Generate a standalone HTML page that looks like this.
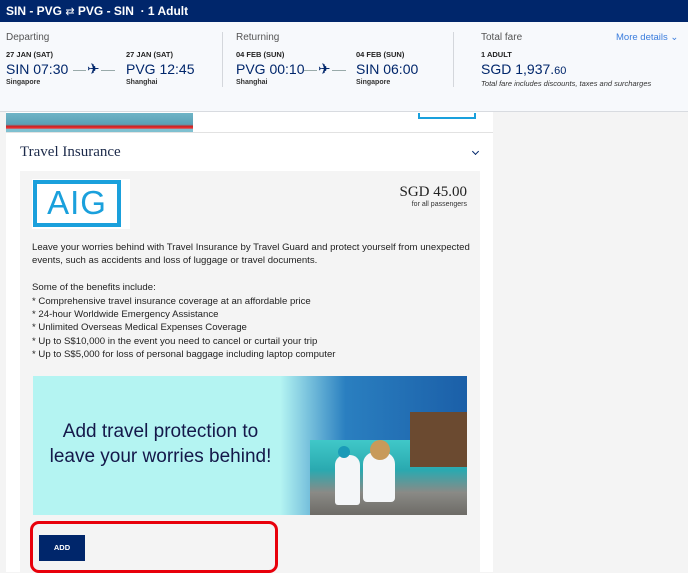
<!DOCTYPE html><html><head><style>
*{margin:0;padding:0;box-sizing:border-box}
body{width:688px;height:572px;overflow:hidden;background:#f4f4f4;font-family:"Liberation Sans",sans-serif;position:relative;color:#333}
.a{position:absolute;white-space:nowrap}
.top{left:0;top:0;width:688px;height:22px;background:#00266b;color:#fff;font-weight:bold;font-size:12px;padding:4px 6px}
.sum{left:0;top:22px;width:688px;height:90px;background:#f7f9fc;border-bottom:1px solid #d8dbe0}
.lb{font-size:10px;color:#555}
.d{font-size:7.5px;font-weight:bold;color:#222}
.t{font-size:14px;color:#00266b}
.c{font-size:7px;font-weight:bold;color:#333}
.vl{width:1px;background:#d4d7dc;height:55px;top:32px}
.ln{height:1px;background:#9aa;width:14px}
.card{left:6px;top:112px;width:487px;height:460px;background:#fff}
.box{left:20px;top:171px;width:460px;height:401px;background:#f4f4f4}
.body{font-size:9.6px;line-height:13.4px;color:#222}
</style></head><body>
<div class="a top">SIN - PVG <span style="font-weight:normal;font-size:11px">⇄</span> PVG - SIN &nbsp;· 1 Adult</div>
<div class="a sum"></div>
<div class="a lb" style="left:6px;top:32px">Departing</div>
<div class="a d" style="left:6px;top:50px">27 JAN (SAT)</div>
<div class="a t" style="left:6px;top:61px">SIN 07:30</div>
<div class="a c" style="left:6px;top:79px">Singapore</div>
<div class="a ln" style="left:73px;top:70px;width:42px"></div>
<div class="a" style="left:86px;top:60px;font-size:15px;color:#00266b;background:#f7f9fc;padding:0 1px">✈</div>
<div class="a d" style="left:126px;top:50px">27 JAN (SAT)</div>
<div class="a t" style="left:126px;top:61px">PVG 12:45</div>
<div class="a c" style="left:126px;top:79px">Shanghai</div>
<div class="a vl" style="left:222px"></div>
<div class="a lb" style="left:236px;top:32px">Returning</div>
<div class="a d" style="left:236px;top:50px">04 FEB (SUN)</div>
<div class="a t" style="left:236px;top:61px">PVG 00:10</div>
<div class="a c" style="left:236px;top:79px">Shanghai</div>
<div class="a ln" style="left:304px;top:70px;width:42px"></div>
<div class="a" style="left:317px;top:60px;font-size:15px;color:#00266b;background:#f7f9fc;padding:0 1px">✈</div>
<div class="a d" style="left:356px;top:50px">04 FEB (SUN)</div>
<div class="a t" style="left:356px;top:61px">SIN 06:00</div>
<div class="a c" style="left:356px;top:79px">Singapore</div>
<div class="a vl" style="left:453px"></div>
<div class="a lb" style="left:481px;top:32px">Total fare</div>
<div class="a" style="left:616px;top:32px;font-size:9.5px;color:#3b7ddd">More details ⌄</div>
<div class="a d" style="left:481px;top:50px">1 ADULT</div>
<div class="a t" style="left:481px;top:61px">SGD 1,937.<span style="font-size:11px">60</span></div>
<div class="a" style="left:481px;top:79px;font-size:7.5px;font-style:italic;color:#333">Total fare includes discounts, taxes and surcharges</div>
<div class="a card"></div>
<div class="a" style="left:6px;top:113px;width:187px;height:19px;background:linear-gradient(#6fb5c7 0,#5aa0b5 60%,#c22 70%,#e33 80%,#7fc0d0 85%)"></div>
<div class="a" style="left:418px;top:113px;width:58px;height:6px;border:2px solid #1aa0dc;border-top:none"></div>
<div class="a" style="left:6px;top:132px;width:487px;height:1px;background:#e2e2e2"></div>
<div class="a" style="left:20px;top:144px;font-family:'Liberation Serif',serif;font-size:15px;color:#1c2a4a">Travel Insurance</div>
<div class="a" style="left:473px;top:149px;width:5px;height:5px;border-right:1px solid #00266b;border-bottom:1px solid #00266b;transform:rotate(45deg)"></div>
<div class="a box"></div>
<div class="a" style="left:32px;top:179px;width:98px;height:50px;background:#fff"></div>
<div class="a" style="left:33px;top:180px;width:88px;height:47px;border:4px solid #1aa0dc;color:#1aa0dc;font-size:33px;text-align:center;line-height:38px;letter-spacing:1px">AIG</div>
<div class="a" style="left:395px;top:184px;width:72px;text-align:right;font-family:'Liberation Serif',serif;font-size:15px;color:#222">SGD 45.00</div>
<div class="a" style="left:380px;top:201px;width:87px;text-align:right;font-size:7px;color:#333">for all passengers</div>
<div class="a body" style="left:32px;top:241px">Leave your worries behind with Travel Insurance by Travel Guard and protect yourself from unexpected<br>events, such as accidents and loss of luggage or travel documents.<br><br>Some of the benefits include:<br>* Comprehensive travel insurance coverage at an affordable price<br>* 24-hour Worldwide Emergency Assistance<br>* Unlimited Overseas Medical Expenses Coverage<br>* Up to S$10,000 in the event you need to cancel or curtail your trip<br>* Up to S$5,000 for loss of personal baggage including laptop computer</div>
<div class="a" style="left:33px;top:376px;width:434px;height:139px;background:linear-gradient(90deg,#b4f4f2 0,#b4f4f2 57%,#2a7fc0 72%,#1b5fa8 100%)"></div>
<div class="a" style="left:310px;top:440px;width:157px;height:75px;background:linear-gradient(#40c8c8,#2aa9b0 40%,#8a8a86 70%,#6d6b66)"></div>
<div class="a" style="left:410px;top:412px;width:57px;height:55px;background:#6b4a30"></div>
<div class="a" style="left:335px;top:455px;width:25px;height:50px;background:#f4f6f8;border-radius:10px 10px 3px 3px"></div>
<div class="a" style="left:363px;top:452px;width:32px;height:50px;background:#f4f6f8;border-radius:12px 12px 4px 4px"></div>
<div class="a" style="left:370px;top:440px;width:20px;height:20px;background:#c89a5a;border-radius:50%"></div>
<div class="a" style="left:338px;top:446px;width:12px;height:12px;background:#1a9ab8;border-radius:50%"></div>
<div class="a" style="left:23px;top:419px;width:275px;text-align:center;font-size:19px;line-height:25px;color:#14184a">Add travel protection to<br>leave your worries behind!</div>
<div class="a" style="left:39px;top:535px;width:46px;height:26px;background:#00266b;color:#fff;font-size:7.5px;font-weight:bold;text-align:center;line-height:26px">ADD</div>
<div class="a" style="left:30px;top:521px;width:248px;height:52px;border:3px solid #e8000b;border-radius:9px"></div>
</body></html>
